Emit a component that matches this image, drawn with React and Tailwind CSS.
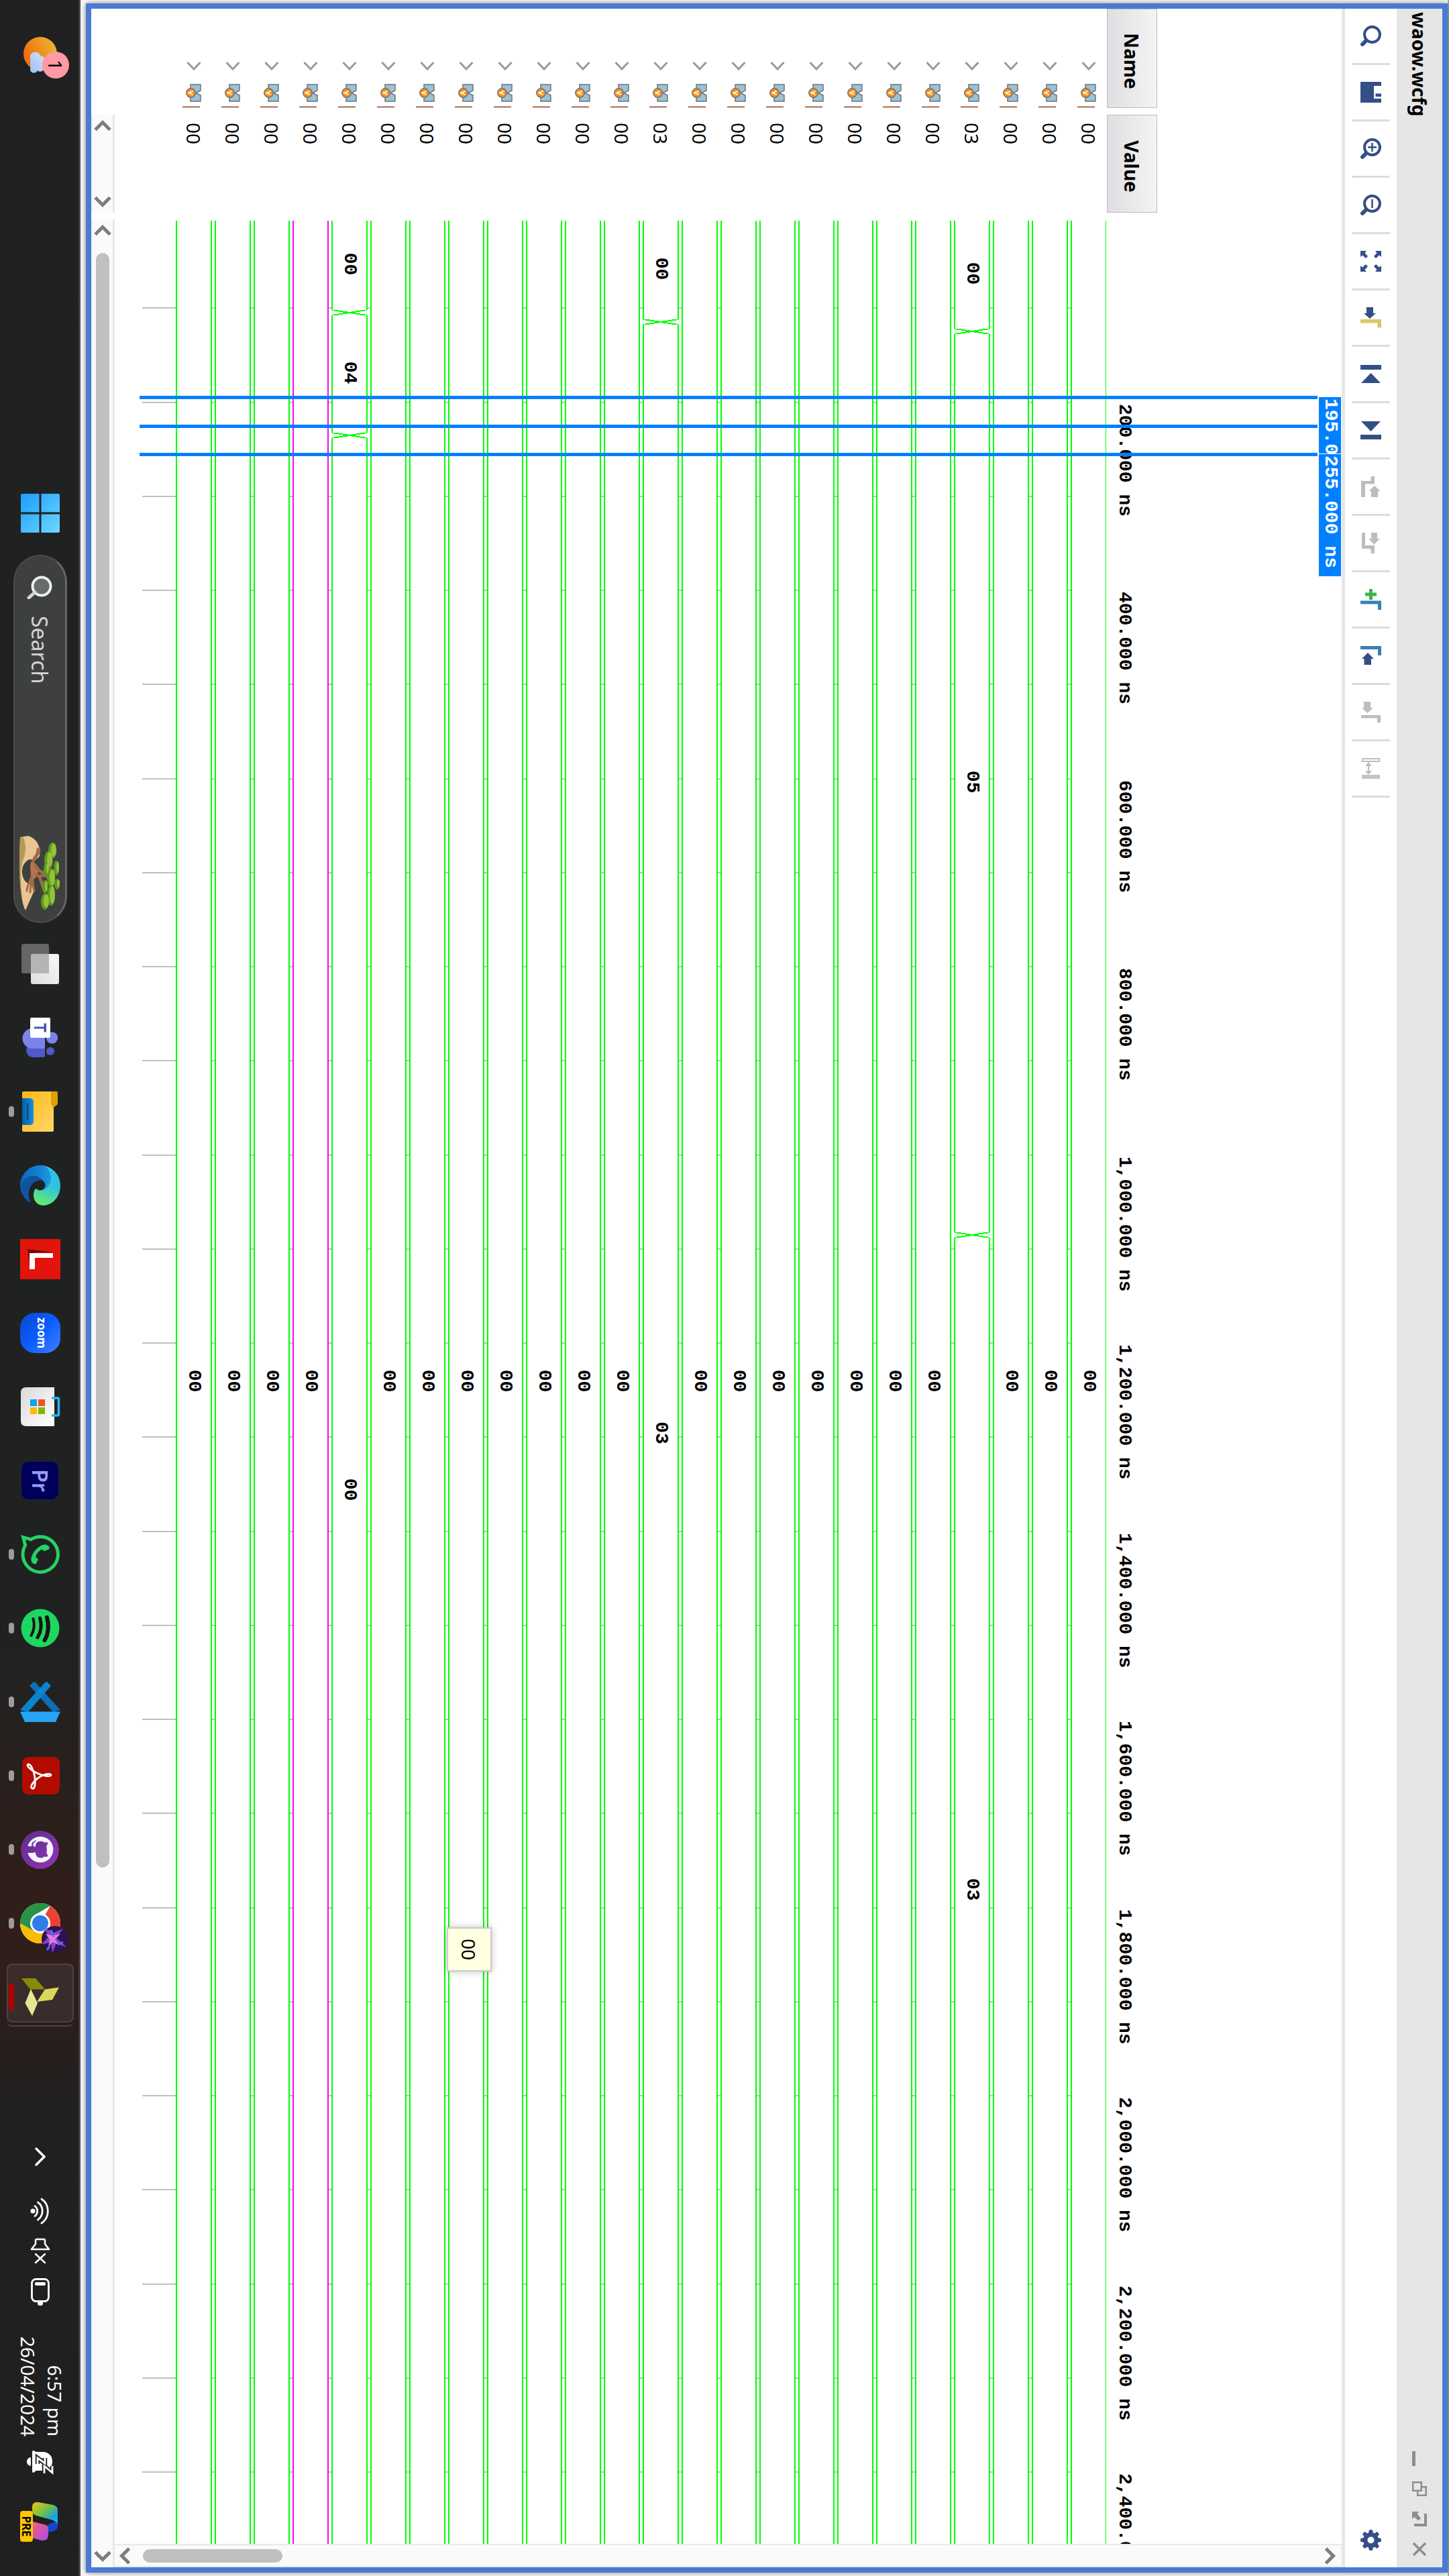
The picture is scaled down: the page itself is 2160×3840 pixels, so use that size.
import React from "react";
import { FaGithub, FaWhatsapp } from "react-icons/fa";

/* ---------- data ---------- */

const PX_PER_NS = 1.4025;
const VIEW_START = -10;
const xAt = (ns) => Math.round(VIEW_START + ns * PX_PER_NS);

const signals = Array.from({ length: 24 }, (_, i) => {
  if (i === 3) return { value: "03", steps: [["00", 125], ["05", 1085], ["03"]] };
  if (i === 11) return { value: "03", steps: [["00", 115], ["03"]] };
  if (i === 19) return { value: "00", steps: [["00", 105], ["04", 235], ["00"]] };
  return { value: "00", steps: [["00"]], selected: i === 20 };
});

const ticks = Array.from({ length: 24 }, (_, i) => (i + 1) * 100);
const labels = Array.from({ length: 12 }, (_, i) => (i + 1) * 200);
const cursors = [195, 225, 255];

/* ---------- toolbar icons ---------- */

const BLUE = "#334f85";
const GRAY = "#bdbdbd";

function Icon({ children }) {
  return (
    <svg viewBox="0 0 31 31" className="h-[31px] w-[31px] shrink-0" aria-hidden="true">
      {children}
    </svg>
  );
}

const Lens = ({ children }) => (
  <Icon>
    <circle cx="13.5" cy="13.5" r="11.5" fill="none" stroke={BLUE} strokeWidth="4" />
    <path d="M23 23l5 5" stroke={BLUE} strokeWidth="6" strokeLinecap="round" />
    {children}
  </Icon>
);

const tools = [
  ["Find", <Lens />],
  [
    "Save",
    <Icon>
      <path d="M0 0H6V11H25V0H31V31H0Z M17.500 0h4.500v8.500h-4.500z" fill={BLUE} />
    </Icon>,
  ],
  ["Zoom in", <Lens><path d="M7 13.500h13M13.500 7v13" stroke={BLUE} strokeWidth="2.500" /></Lens>],
  ["Zoom out", <Lens><path d="M7 13.500h13" stroke={BLUE} strokeWidth="2.500" /></Lens>],
  [
    "Zoom fit",
    <Icon>
      <path d="M0 0h9L6.500 3 11 8 8 11 3 6.500 0 9zM31 0v9l-3-2.500L23 11l-3-3 4.500-5L22 0zM0 31v-9l3 2.500L8 20l3 3-4.500 5L9 31zM31 31h-9l2.500-3L20 23l3-3 5 4.500 3-2.500z" fill={BLUE} />
    </Icon>,
  ],
  [
    "Go to cursor",
    <Icon>
      <path d="M0 12h9V8l8 9-8 9v-4H0z" fill={BLUE} />
      <path d="M18 0h12.500v5.500h-7V31H18z" fill="#dcc664" />
    </Icon>,
  ],
  [
    "Go to start",
    <Icon>
      <path d="M2 0h7v31H2zM29 1v29L14 15.500z" fill={BLUE} />
    </Icon>,
  ],
  [
    "Go to end",
    <Icon>
      <path d="M22 0h7v31h-7zM2 1v29l15-14.500z" fill={BLUE} />
    </Icon>,
  ],
  [
    "Previous transition",
    <Icon>
      <path d="M0 10h11.500v14H31v6H7V15.500H0z" fill={GRAY} />
      <path d="M14 10l8-8.500V5h9v10h-9v3.500z" fill={GRAY} />
    </Icon>,
  ],
  [
    "Next transition",
    <Icon>
      <path d="M31 10H19v14H0v5h24V15.500h7z" fill={GRAY} />
      <path d="M17.500 10.500L9 2v4H0v9h9v4z" fill={GRAY} />
    </Icon>,
  ],
  [
    "Add marker",
    <Icon>
      <path d="M0 13h5.500V7h5v6H16v5h-5.500v6h-5v-6H0z" fill="#3fb54a" />
      <path d="M17.500 0H31v5h-8.500v26h-5z" fill="#3680b5" />
    </Icon>,
  ],
  [
    "Previous marker",
    <Icon>
      <path d="M1 0h14v5H6v26H1z" fill="#3680b5" />
      <path d="M11 20l9-9v4h9v10.500h-9V29z" fill={BLUE} />
    </Icon>,
  ],
  [
    "Next marker",
    <Icon>
      <path d="M20 1h11v5h-6.500v24H20z" fill={GRAY} />
      <path d="M17 20.500L9 12v4H0v10h9v3z" fill={GRAY} />
    </Icon>,
  ],
  [
    "Swap cursors",
    <Icon>
      <path d="M1 3h4v25H1z" fill="#fff" stroke={GRAY} strokeWidth="2" />
      <path d="M25 2h6v27h-6z" fill="#c4c4c4" />
      <path d="M6 19l6-5v4h7v-4l6 5-6 5v-4h-7v4z" fill={GRAY} />
    </Icon>,
  ],
];

function Gear() {
  return (
    <Icon>
      {[0, 45, 90, 135].map((a) => (
        <rect key={a} x="12.500" y="0" width="6" height="31" rx="2.500" fill={BLUE} transform={`rotate(${a} 15.500 15.500)`} />
      ))}
      <circle cx="15.500" cy="15.500" r="11.500" fill={BLUE} />
      <circle cx="15.500" cy="15.500" r="5" fill="#fff" />
    </Icon>
  );
}

/* ---------- window parts ---------- */

function TitleBar() {
  const controls = [
    ["Minimise", <path d="M0 17h22v5H0z" fill="#8e8e8e" />],
    [
      "Restore",
      <g fill="none" stroke="#8e8e8e" strokeWidth="2.500">
        <path d="M1.250 8.250h12.500v12.500H1.250z" />
        <path d="M8.250 8V1.250h12.500v12.500H14" />
      </g>,
    ],
    [
      "Float",
      <g fill="#8e8e8e">
        <path d="M3 0h19v19h-4V4H3z" />
        <path d="M0 22V11.500l3 3L10 9l3.500 3.500L8 19l3 3z" />
      </g>,
    ],
    ["Close", <path d="M2 2l18 18M20 2L2 20" stroke="#8e8e8e" strokeWidth="3.500" fill="none" />],
  ];
  return (
    <header className="flex h-[68px] shrink-0 items-center justify-between bg-[#e6e6e6] pr-4 pl-[5px]">
      <h1 className="text-[28px] leading-9 font-bold text-black">waow.wcfg</h1>
      <div className="flex gap-[23px]">
        {controls.map(([name, art]) => (
          <button key={name} type="button" aria-label={name} className="block">
            <svg viewBox="0 0 22 22" className="h-[22px] w-[22px]">{art}</svg>
          </button>
        ))}
      </div>
    </header>
  );
}

function Toolbar() {
  return (
    <div className="flex h-[82px] shrink-0 items-center justify-between border-b-[5px] border-[#e6e6e6] bg-white pr-[25px]">
      <div className="flex">
        {tools.map(([name, art]) => (
          <div key={name} className="flex h-[57px] w-[84px] items-center border-r-[3px] border-[#dcdcdc] pl-[25px]">
            <button type="button" aria-label={name}>{art}</button>
          </div>
        ))}
      </div>
      <button type="button" aria-label="Settings"><Gear /></button>
    </div>
  );
}

function BusIcon() {
  return (
    <svg viewBox="0 0 27 23" className="h-[23px] w-[27px]" aria-hidden="true">
      <path d="M1 1h9l3.500 7L17 1h9v15H1z" fill="#9ac2d8" stroke="#6f7276" strokeWidth="1.500" />
      <circle cx="13.500" cy="15.500" r="6.700" fill="#f7941e" stroke="#77706a" strokeWidth="1.500" />
      <path d="M11 12.500l2.500 6 2.500-6" fill="none" stroke="#fff" strokeWidth="1.800" />
    </svg>
  );
}

function SignalTable() {
  const head =
    "flex h-[75px] items-center justify-center border border-[#bcbcbc] bg-linear-to-b from-[#f4f4f4] to-[#dfdfe3] pl-2 text-[28px] leading-9 font-bold text-black";
  return (
    <table className="mt-[275px] block w-[304px] shrink-0">
      <thead className="block">
        <tr className="grid grid-cols-[148px_146px] gap-x-[10px]">
          <th scope="col" className={head}>Name</th>
          <th scope="col" className={head}>Value</th>
        </tr>
      </thead>
      <tbody className="-mt-0.5 block">
        {signals.map((s, i) => (
          <tr key={i} className="grid h-[58px] grid-cols-[148px_146px] gap-x-[10px]">
            <td className="flex items-center justify-end">
              <button type="button" aria-label="Expand signal" className="mr-5">
                <svg viewBox="0 0 14 22" className="h-[22px] w-[14px]">
                  <path d="M2 1.500L12 11 2 20.500" fill="none" stroke="#9a9a9a" strokeWidth="3" />
                </svg>
              </button>
              <BusIcon />
              <span className="mr-px mb-3 ml-1.5 h-[26px] w-0.5 self-end border-l border-[#fff3c0] bg-[#5a0000]" />
            </td>
            <td className="flex items-center pl-3 text-[28px] leading-9 text-black">{s.value}</td>
          </tr>
        ))}
      </tbody>
    </table>
  );
}

function Crossing() {
  return (
    <svg viewBox="0 0 8 54" className="h-full w-2 shrink-0" aria-hidden="true">
      <path d="M0 1L8 53M8 1L0 53" fill="none" stroke="#00ff00" strokeWidth="2" shapeRendering="crispEdges" />
    </svg>
  );
}

function WaveRow({ signal }) {
  const line = signal.selected ? "border-[#ff00ff]" : "border-[#00ff00]";
  let from = 0;
  return (
    <div className="flex h-[54px] bg-white">
      {signal.steps.map(([value, until], i) => {
        const last = until === undefined;
        const end = last ? 0 : xAt(until) - 4;
        const width = end - from;
        from = end + 8;
        return (
          <React.Fragment key={i}>
            <div
              className={`flex items-center justify-center border-y-2 pr-1 ${line} ${last ? "flex-1" : "shrink-0"}`}
              style={last ? undefined : { width }}
            >
              {value}
            </div>
            {!last && <Crossing />}
          </React.Fragment>
        );
      })}
    </div>
  );
}

function WavePane() {
  return (
    <section
      aria-label="Waveform"
      className="relative ml-3 flex min-w-0 flex-1 flex-col overflow-hidden font-['Liberation_Mono',monospace] text-[28px] leading-8 font-bold text-black"
    >
      <div className="relative mt-[275px] h-[76px] shrink-0">
        {labels.map((ns) => (
          <span key={ns} className="absolute top-[33px] whitespace-pre" style={{ left: xAt(ns) + 2 }}>
            {ns.toLocaleString("en-US")}.000 ns
          </span>
        ))}
      </div>
      <div className="relative shrink-0 overflow-hidden pb-[50px]">
        {ticks.map((ns) => (
          <span key={ns} className="absolute inset-y-0 w-0.5 bg-[#bfbfbf]" style={{ left: xAt(ns) - 1 }} />
        ))}
        <div className="relative -mt-px flex flex-col gap-1">
          {signals.map((s, i) => (
            <WaveRow key={i} signal={s} />
          ))}
        </div>
      </div>
      {cursors.map((ns) => (
        <span key={ns} className="absolute top-9 bottom-[37px] w-[5px] bg-[#0080ff]" style={{ left: xAt(ns) - 2 }} />
      ))}
      {[195, 255].map((ns) => (
        <span
          key={ns}
          className="absolute top-px h-[33px] w-[183px] border-l border-white bg-[#0080ff] pl-0.5 text-white"
          style={{ left: xAt(ns) - 1 }}
        >
          {ns}.000 ns
        </span>
      ))}
      <div
        role="tooltip"
        className="absolute top-[1267px] left-[2544px] flex h-[67px] w-[66px] items-center justify-center border-2 border-[#cccccc] bg-[#ffffe1] font-['Noto_Sans',sans-serif] font-normal shadow-[0_0_10px_rgba(0,0,0,0.25)]"
      >
        00
      </div>
    </section>
  );
}

function Chevron({ turn }) {
  return (
    <svg viewBox="0 0 28 28" className={`h-7 w-7 ${turn}`} aria-hidden="true">
      <path d="M19.500 3L8.500 14l11 11" fill="none" stroke="#7d7d7d" strokeWidth="5" />
    </svg>
  );
}

function HScroll({ className, thumb }) {
  return (
    <div className={`flex h-[35px] items-center justify-between border-t-[3px] border-b-2 border-[#e8e8e8] border-b-[#f0f0f0] bg-[#fafafa] px-[3px] ${className}`}>
      <button type="button" aria-label="Scroll left"><Chevron turn="rotate-0" /></button>
      {thumb && (
        <div className="ml-[19px] flex-1">
          <div className="h-5 w-[70.4%] rounded-full bg-[#c0c0c0]" />
        </div>
      )}
      <button type="button" aria-label="Scroll right"><Chevron turn="rotate-180" /></button>
    </div>
  );
}

function VScroll() {
  return (
    <div className="flex w-[35px] shrink-0 flex-col items-center justify-between border-r-2 border-l-2 border-[#e8e8e8] bg-[#fafafa] pt-1 pb-0.5">
      <button type="button" aria-label="Scroll up"><Chevron turn="rotate-90" /></button>
      <div className="flex flex-1 flex-col justify-end pb-3">
        <div className="h-[208px] w-5 rounded-full bg-[#c0c0c0]" />
      </div>
      <button type="button" aria-label="Scroll down"><Chevron turn="-rotate-90" /></button>
    </div>
  );
}

function WaveWindow() {
  return (
    <main className="relative mx-[5px] mb-2 flex min-h-0 flex-1 flex-col border-8 border-[#4a7bd0] bg-white shadow-[0_0_9px_rgba(0,0,0,0.5)]">
      <TitleBar />
      <Toolbar />
      <div className="flex min-h-0 flex-1">
        <SignalTable />
        <WavePane />
        <VScroll />
      </div>
      <div className="flex shrink-0">
        <HScroll className="ml-[158px] w-[146px]" />
        <HScroll className="ml-2.5 flex-1" thumb />
      </div>
    </main>
  );
}

/* ---------- taskbar ---------- */

function Art({ children, size = "h-[60px] w-[60px]" }) {
  return (
    <svg viewBox="0 0 60 60" className={size} aria-hidden="true">
      {children}
    </svg>
  );
}

function Weather() {
  return (
    <button type="button" aria-label="Weather, 1 alert" className="relative ml-[50px] block h-[70px] w-[70px]">
      <svg viewBox="0 0 70 70" className="h-full w-full">
        <defs>
          <linearGradient id="sun" x1="0.200" y1="0" x2="0.600" y2="1">
            <stop offset="0" stopColor="#ecb92e" />
            <stop offset="1" stopColor="#f06a10" />
          </linearGradient>
          <linearGradient id="cloud" x1="0" y1="0" x2="1" y2="1">
            <stop offset="0" stopColor="#dbe7fb" />
            <stop offset="1" stopColor="#9dbcf2" />
          </linearGradient>
        </defs>
        <circle cx="30" cy="35" r="25" fill="url(#sun)" />
        <path d="M33 50a8 8 0 0 1 0-15 12 12 0 0 1 20-6c5 3 4 9 2 10a6 6 0 0 1 0 11z" fill="url(#cloud)" />
      </svg>
      <span className="absolute -top-2 right-[3px] flex h-10 w-10 items-center justify-center rounded-full bg-[#ff99a4] text-[28px] leading-8 text-black">
        1
      </span>
    </button>
  );
}

function StartLogo() {
  return (
    <Art size="h-[58px] w-[58px]">
      <defs>
        <linearGradient id="win" x1="0" y1="1" x2="1" y2="0">
          <stop offset="0" stopColor="#1a9cff" />
          <stop offset="1" stopColor="#6fd8ff" />
        </linearGradient>
      </defs>
      <path d="M2 0h26.500v28.500H0V2q0-2 2-2zM31.500 0H58q2 0 2 2v26.500H31.500zM0 31.500h28.500V60H2q-2 0-2-2zM31.500 31.500H60V58q0 2-2 2H31.500z" fill="url(#win)" />
    </Art>
  );
}

function Bonsai() {
  return (
    <svg viewBox="0 0 111 60" className="h-[60px] w-[111px] shrink-0" aria-hidden="true">
      <path d="M0 47C4 34 16 28 30 30c6 4 6 10 5 15C40 58 60 60 70 49c3-8 8-12 14-10l27 12C100 58 60 60 30 60L2 59z" fill="#e9c594" />
      <path d="M2 59L3 54C14 50 24 50 34 54c14 6 40 4 58 2-14 4-42 4-62 4z" fill="#b39a52" />
      <path d="M36 41C42 36 46 32 52 32c8 0 10 4 12 6 5 4 5 5 7 8-4 0-8-3-14-3-8 0-12 3-21-2z" fill="#b5774e" />
      <g fill="none" stroke="#a06a48" strokeLinecap="round">
        <path d="M39 40c-9 0-9-8-20-7M36 37c-7-2-8-7-16-7M64 42c8 0 12 2 20 2M60 41c8 4 12 7 22 8M66 40c6-1 10 0 16-2" strokeWidth="3" />
        <path d="M44 36c10-6 12-10 10-16-2-5-8-6-16-8M57 36c3-8 12-8 22-12M60 30c-2-8 0-12 4-16" strokeWidth="4.500" />
      </g>
      {[[22, 11, 12, 6], [36, 17, 13, 6], [50, 20, 10, 4], [48, 5, 11, 4], [63, 13, 14, 6], [72, 4, 8, 4], [76, 22, 10, 4], [89, 13, 15, 6], [98, 22, 12, 6]].map(([x, y, rx, ry], i) => (
        <g key={i}>
          <ellipse cx={x} cy={y} rx={rx} ry={ry} fill="#5c9a1f" />
          <ellipse cx={x - 1} cy={y - 2} rx={rx - 2} ry={ry - 2} fill="#94c23c" />
        </g>
      ))}
    </svg>
  );
}

function SearchBox() {
  return (
    <label className="ml-[7px] flex h-20 w-[549px] items-center rounded-full border-2 border-[#4a4c4c] border-t-[3px] border-t-[#666] bg-[#3e4040] pr-[17px] pl-7">
      <svg viewBox="0 0 36 38" className="h-[38px] w-9 shrink-0" aria-hidden="true">
        <circle cx="17" cy="16" r="13.500" fill="#6a6c6c" stroke="#eceff0" strokeWidth="4" />
        <path d="M26 26l8 9" stroke="#d5d8da" strokeWidth="5" strokeLinecap="round" />
      </svg>
      <input
        type="search"
        aria-label="Search"
        placeholder="Search"
        className="ml-[25px] min-w-0 flex-1 bg-transparent text-[32px] leading-10 text-white outline-none placeholder:text-[#d3d5d4]"
      />
      <Bonsai />
    </label>
  );
}

const chromeDisc = (
  <g>
    <circle cx="30" cy="30" r="30" fill="#fff" />
    <path d="M30 30L4 15A30 30 0 0 1 56 15z" fill="#ea4335" />
    <path d="M30 15H56A30 30 0 0 1 30 60L43 37z" fill="#fbbc05" />
    <path d="M17 37L4 15A30 30 0 0 0 30 60L43 37z" fill="#2b9348" />
    <circle cx="30" cy="30" r="15" fill="#fff" />
    <circle cx="30" cy="30" r="12" fill="#2f7de9" />
  </g>
);

const apps = [
  {
    name: "Task view",
    art: (
      <Art>
        <defs>
          <linearGradient id="tv" x1="0" y1="0" x2="1" y2="1">
            <stop offset="0" stopColor="#f8f8f8" />
            <stop offset="1" stopColor="#dedede" />
          </linearGradient>
        </defs>
        <rect x="0" y="17" width="44" height="41" rx="3" fill="#666" />
        <rect x="15" y="2" width="45" height="42" rx="3" fill="url(#tv)" />
        <path d="M15 17h29v27H18q-3 0-3-3z" fill="#b5b5b5" />
      </Art>
    ),
  },
  {
    name: "Teams",
    art: (
      <Art>
        <circle cx="30" cy="12.500" r="8.700" fill="#7b83eb" />
        <circle cx="50" cy="15" r="6" fill="#5059c9" />
        <path d="M38 23h19q2 0 2 2v13a10 10 0 0 1-20 5z" fill="#5059c9" />
        <path d="M16 23h30v17a15 15 0 0 1-30 3z" fill="#7b83eb" />
        <rect x="0" y="15" width="30" height="30" rx="2" fill="#fff" />
        <path d="M8.500 21h13v3.500h-5V39h-3V24.500h-5z" fill="#4b53bc" />
      </Art>
    ),
  },
  {
    name: "File Explorer",
    running: true,
    art: (
      <Art>
        <defs>
          <linearGradient id="folder" x1="1" y1="0" x2="0" y2="1">
            <stop offset="0" stopColor="#ffd768" />
            <stop offset="1" stopColor="#fdb913" />
          </linearGradient>
          <linearGradient id="pocket" x1="0" y1="0" x2="0" y2="1">
            <stop offset="0" stopColor="#1490df" />
            <stop offset="1" stopColor="#0a5ea8" />
          </linearGradient>
        </defs>
        <path d="M0 6q0-2 2-2h17l5 6-5 5H0z" fill="#dfa000" />
        <path d="M0 14h19l5-4h34q2 0 2 2v43q0 2-2 2H2q-2 0-2-2z" fill="url(#folder)" />
        <path d="M10 57V46q0-6 6-6h28q6 0 6 6v11z" fill="url(#pocket)" />
        <path d="M18 47.500h24v2.500H18z" fill="#0a4d8c" />
      </Art>
    ),
  },
  {
    name: "Edge",
    art: (
      <svg viewBox="0 0 256 256" className="h-[60px] w-[60px]" aria-hidden="true">
        <defs>
          <linearGradient id="edgeTop" x1="0" y1="0.300" x2="1" y2="0.600">
            <stop offset="0" stopColor="#35b8f5" />
            <stop offset="0.500" stopColor="#30c4d8" />
            <stop offset="1" stopColor="#66eb6e" />
          </linearGradient>
          <linearGradient id="edgeMid" x1="0.500" y1="0" x2="0.400" y2="1">
            <stop offset="0" stopColor="#1b9de2" />
            <stop offset="1" stopColor="#0a63c0" />
          </linearGradient>
        </defs>
        <path d="M231 190.500c-3.400 1.800-6.900 3.400-10.500 4.700a101.900 101.900 0 0 1-35.900 6.400c-47.300 0-88.500-32.500-88.500-74.300a31.500 31.500 0 0 1 16.400-27.300c-42.800 1.800-53.800 46.400-53.800 72.500 0 74 68.100 81.400 82.800 81.400 7.900 0 19.800-2.300 27-4.600l1.300-.4a128.300 128.300 0 0 0 66.600-52.800 4 4 0 0 0-5.400-5.600z" fill="#10549c" />
        <path d="M105.700 241.400a79.200 79.200 0 0 1-22.700-21.300 80.700 80.700 0 0 1 29.500-120c3.200-1.500 8.500-4.100 15.600-4a32.400 32.400 0 0 1 25.700 13 31.900 31.900 0 0 1 6.300 18.700c0-.2 24.500-79.600-80-79.600-43.900 0-80 41.600-80 78.200a130.200 130.200 0 0 0 12.100 56 128 128 0 0 0 156.400 67 75.500 75.500 0 0 1-62.800-8z" fill="url(#edgeMid)" />
        <path d="M152.300 148.900c-.9 1-3.400 2.500-3.400 5.600 0 2.600 1.700 5.200 4.800 7.300 14.300 10 41.400 8.600 41.500 8.600a59.600 59.600 0 0 0 30.300-8.300A61.400 61.400 0 0 0 256 109.200c.3-22.400-8-37.300-11.300-43.900C223.500 23.900 177.700 0 128 0A128 128 0 0 0 0 126.200c.5-36.500 36.800-66 80-66 3.500 0 23.500.3 42 10a72.600 72.600 0 0 1 30.900 29.300c6.100 10.600 7.200 24.100 7.200 29.500s-2.700 13.300-7.800 19.900z" fill="url(#edgeTop)" />
      </svg>
    ),
  },
  {
    name: "Lenovo Vantage",
    art: (
      <Art>
        <path d="M0 0h60v60H0z" fill="#e2140c" />
        <path d="M15 49L20 10v28l19 8z" fill="#6d0806" />
        <path d="M21 11h7v27h17v8H21z" fill="#fff" />
      </Art>
    ),
  },
  {
    name: "Zoom",
    art: (
      <span className="flex h-[60px] w-[60px] items-center justify-center rounded-[22px] bg-linear-to-tr from-[#0a48c8] via-[#0b5cff] to-[#3b80ff] pb-1 text-[17px] leading-5 font-bold text-white">
        zoom
      </span>
    ),
  },
  {
    name: "Microsoft Store",
    art: (
      <Art>
        <defs>
          <linearGradient id="bag" x1="1" y1="0" x2="0" y2="1">
            <stop offset="0" stopColor="#fff" />
            <stop offset="1" stopColor="#d9d9d9" />
          </linearGradient>
        </defs>
        <path d="M1 9h58v42q0 8-8 8H9q-8 0-8-8z" fill="url(#bag)" />
        <path d="M17 13V4q0-1.500 1.500-1.500h23Q43 2.500 43 4v9" fill="none" stroke="#27b5f0" strokeWidth="3.500" />
        <path d="M19 23h10v10H19z" fill="#f25022" />
        <path d="M31 23h10v10H31z" fill="#7fba00" />
        <path d="M19 35h10v10H19z" fill="#00a4ef" />
        <path d="M31 35h10v10H31z" fill="#ffb900" />
      </Art>
    ),
  },
  {
    name: "Premiere Pro",
    art: (
      <span className="flex h-[55px] w-14 items-center justify-center rounded-[10px] bg-[#00005b] text-[32px] leading-9 font-semibold text-[#9999ff]">
        Pr
      </span>
    ),
  },
  { name: "WhatsApp", running: true, art: <FaWhatsapp className="h-[66px] w-[66px] text-[#25d366]" /> },
  {
    name: "Spotify",
    running: true,
    art: (
      <Art>
        <circle cx="30" cy="30" r="28.500" fill="#1ed760" />
        <g fill="none" stroke="#191414" strokeLinecap="round">
          <path d="M14 20c12-3.500 25-2 34 3.500" strokeWidth="6" />
          <path d="M15 30.500c10-3 21-1.500 29 3.500" strokeWidth="5" />
          <path d="M16 40.500c9-2.500 18-1 25 3" strokeWidth="4" />
        </g>
      </Art>
    ),
  },
  {
    name: "Visual Studio Code",
    running: true,
    art: (
      <Art>
        <path d="M6 46L0 40q0-2 1-3L42 0l3 11z" fill="#0a6fb4" />
        <path d="M6 14L0 20q0 2 1 3l41 37 3-12z" fill="#0a84d0" />
        <path d="M44.500 0L60 7v46l-15.500 7z" fill="#25a4f3" />
      </Art>
    ),
  },
  {
    name: "Acrobat Reader",
    running: true,
    art: (
      <Art>
        <rect x="2" y="1" width="56" height="56" rx="9" fill="#b30b00" />
        <path d="M29 14c-4 2 0 14 5 20 5 7 13 12 15 8s-8-5-16-4c-9 1-21 6-20 10 2 4 10-6 13-13 3-6 7-20 3-21z" fill="none" stroke="#fff" strokeWidth="2.800" />
      </Art>
    ),
  },
  {
    name: "GitHub Desktop",
    running: true,
    art: (
      <span className="flex h-[57px] w-[57px] items-center justify-center rounded-full bg-linear-to-tr from-[#5c2d8c] to-[#9333b8]">
        <FaGithub className="h-10 w-10 text-[#f4f4fa]" />
      </span>
    ),
  },
  {
    name: "Chrome",
    running: true,
    art: (
      <span className="relative">
        <Art>{chromeDisc}</Art>
        <svg viewBox="0 0 40 40" className="absolute top-[-12px] right-[-14px] h-10 w-10" aria-hidden="true">
          <defs>
            <clipPath id="avatar"><circle cx="20" cy="20" r="20" /></clipPath>
          </defs>
          <g clipPath="url(#avatar)">
            <path d="M0 0h40v40H0z" fill="#2a1450" />
            <path d="M4 8l14 10L32 2l-6 16 14 6-16 2 4 14-12-10L2 36l8-14z" fill="#8a3fd0" />
            <path d="M12 12l8 8 8-6-4 10 8 6-12-2-8 6 2-10z" fill="#e07be0" />
            <path d="M6 26l10-4M24 8l4 8M30 28l6 4" stroke="#5a6cf0" strokeWidth="3" />
          </g>
        </svg>
      </span>
    ),
  },
  {
    name: "Vivado",
    active: true,
    art: (
      <Art>
        <path d="M2 58V37l16.500-14v22z" fill="#8a8a0a" />
        <path d="M15.500 2l3 21L37 35 34 12z" fill="#d9d957" />
        <path d="M18 44l21 8.500L58 42 39 34z" fill="#e5e795" />
      </Art>
    ),
  },
];

function AppButton({ app }) {
  if (app.active) {
    return (
      <button type="button" aria-label={app.name} className="relative flex h-full w-[110px] items-center justify-center">
        <span className="absolute top-[10px] left-[15px] h-[100px] w-[84px] rounded-lg border-r-2 border-[#4b4342]" />
        <span className="absolute top-[10px] left-[5px] h-[100px] w-[88px] rounded-lg border-2 border-[#4b4342] bg-[#3a2c2b]" />
        <span className="relative">{app.art}</span>
        <span className="absolute bottom-[13px] left-[35px] h-2 w-10 rounded-full bg-[#b50000]" />
      </button>
    );
  }
  return (
    <button type="button" aria-label={app.name} className="relative flex h-full w-[110px] items-center justify-center">
      {app.art}
      {app.running && <span className="absolute bottom-[13px] h-2 w-4 rounded-full bg-[#9d9c9a]" />}
    </button>
  );
}

function Copilot() {
  return (
    <span className="relative block h-[60px] w-[60px]">
      <Art>
        <defs>
          <linearGradient id="ribbonA" x1="0" y1="1" x2="1" y2="0">
            <stop offset="0" stopColor="#f4c20d" />
            <stop offset="0.450" stopColor="#6cc24a" />
            <stop offset="0.750" stopColor="#1a9fe0" />
            <stop offset="1" stopColor="#1fb8f5" />
          </linearGradient>
          <linearGradient id="ribbonB" x1="0" y1="1" x2="1" y2="0">
            <stop offset="0" stopColor="#ff7a59" />
            <stop offset="0.500" stopColor="#e0559f" />
            <stop offset="1" stopColor="#a34df0" />
          </linearGradient>
        </defs>
        <path d="M28 4h9q5 0 7 6l2 8H34z" fill="#1246c8" />
        <path d="M12 4h22q-5 2-7 10l-6 22q-2 6-8 6H8q-8 0-7-9L5 11q2-7 7-7z" fill="url(#ribbonA)" />
        <path d="M38 18h12q9 0 8 10l-4 15q-2 7-9 7H22q6-2 8-9l4-16q1-6 4-7z" fill="url(#ribbonB)" />
      </Art>
      <span className="absolute right-0 bottom-0 flex h-[19px] w-[46px] items-center justify-center rounded-[4px] bg-[#ffc800] text-[17px] leading-5 font-bold text-black">
        PRE
      </span>
    </span>
  );
}

function Tray() {
  return (
    <div className="flex h-full w-[808px] items-center pl-[168px] text-white">
      <button type="button" aria-label="Show hidden icons">
        <svg viewBox="0 0 30 18" className="h-[18px] w-[30px]">
          <path d="M3 15L15 3l12 12" fill="none" stroke="#fff" strokeWidth="3.500" strokeLinecap="round" />
        </svg>
      </button>
      <button type="button" aria-label="Network, volume and battery" className="ml-[46px] flex items-center gap-5">
        <svg viewBox="0 0 40 30" className="h-[30px] w-10">
          <g fill="none" stroke="#fff" strokeWidth="2.800" strokeLinecap="round">
            <path d="M2 13a22 22 0 0 1 36 0" />
            <path d="M7 18.500a16 16 0 0 1 26 0" />
            <path d="M12.500 23a9.500 9.500 0 0 1 15 0" />
          </g>
          <circle cx="20" cy="26" r="3.500" fill="#fff" />
        </svg>
        <svg viewBox="0 0 40 30" className="h-[30px] w-10">
          <g fill="none" stroke="#fff" strokeWidth="2.500" strokeLinecap="round" strokeLinejoin="round">
            <path d="M2 10q0-2 2-2h5l8-6v26l-8-6H4q-2 0-2-2z" />
            <path d="M24 8l13 14M37 8L24 22" />
          </g>
        </svg>
        <svg viewBox="0 0 41 28" className="h-7 w-[41px]">
          <rect x="1.500" y="1.500" width="33" height="25" rx="6" fill="none" stroke="#fff" strokeWidth="2.800" />
          <rect x="6" y="6" width="5" height="16" rx="2" fill="#fff" />
          <path d="M36 10h2q3 0 3 4t-3 4h-2z" fill="#fff" />
        </svg>
      </button>
      <button type="button" aria-label="Clock and calendar" className="w-[195px] pb-1 text-right text-[28px] leading-10">
        <time dateTime="2024-04-26T18:57" className="block">
          6:57 pm
          <br />
          26/04/2024
        </time>
      </button>
      <button type="button" aria-label="Notifications" className="ml-5 flex">
        <svg viewBox="0 0 40 42" className="h-[42px] w-10">
          <path d="M1 31l2-4V16C4 8 9 3 17 3s14 5 14 13v11l3 4q0 2-2 2H3q-2 0-2-2z" fill="#fff" />
          <path d="M11 35h13q-1 6-6.500 6T11 35z" fill="#fff" />
          <path d="M12 14h8l-8 11h9M24 3h10L24 15h11" fill="none" stroke="#202020" strokeWidth="6.500" />
          <path d="M12 14h8l-8 11h9M24 3h10L24 15h11" fill="none" stroke="#fff" strokeWidth="2.800" />
        </svg>
      </button>
      <button type="button" aria-label="Copilot" className="ml-[37px]"><Copilot /></button>
    </div>
  );
}

function Taskbar() {
  return (
    <footer className="flex h-[120px] shrink-0 items-center bg-[#202020] bg-[linear-gradient(90deg,#202020_0%,#202222_30%,#202222_64%,#2f1e1a_73%,#2f1e1a_77%,#221f1f_81%,#202020_100%)] shadow-[inset_0_3px_#434343]">
      <div className="flex-1"><Weather /></div>
      <nav aria-label="Apps" className="flex h-full items-center">
        <button type="button" aria-label="Start" className="flex h-full w-[110px] items-center justify-center"><StartLogo /></button>
        <SearchBox />
        <div className="ml-1.5 flex h-full">
          {apps.map((app) => (
            <AppButton key={app.name} app={app} />
          ))}
        </div>
      </nav>
      <Tray />
    </footer>
  );
}

export default function App() {
  return (
    <div className="h-screen w-screen overflow-hidden bg-white">
      <div className="flex h-[100vw] w-[100vh] origin-top-left translate-x-[100vw] rotate-90 flex-col border-t-2 border-[#a7a7a7] font-['Noto_Sans',sans-serif]">
        <WaveWindow />
        <Taskbar />
      </div>
    </div>
  );
}
